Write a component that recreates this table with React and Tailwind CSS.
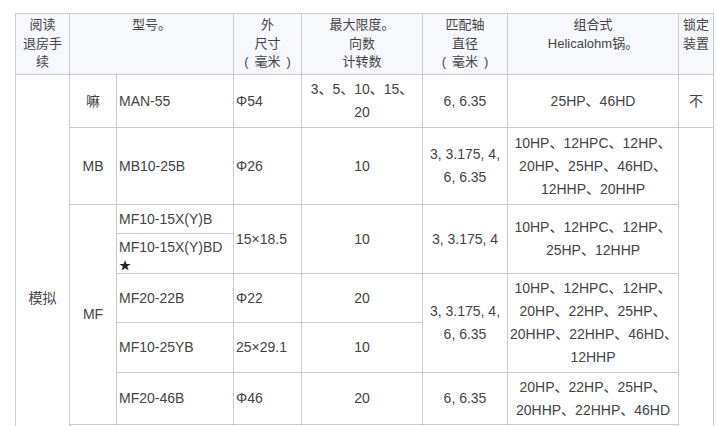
const font = { fontFamily: '"Liberation Sans", "Noto Sans CJK SC", sans-serif' }

const th = 'border border-[#cbcbcb] bg-[#f6f8fb] align-top text-center font-normal px-[2px] pt-[2px] pb-0'
const td = 'border border-[#cbcbcb] align-middle text-center px-[2px] py-0'
const tdl = 'border border-[#cbcbcb] align-middle text-left px-[2px] py-0'

const mm = (
    <>
        (<span className="px-[6px]">毫米</span>)
    </>
)

export default function App() {
    return (
        <div className="h-[426px] w-[716px] overflow-hidden bg-white pt-[13px] pl-[15px]" style={font}>
            <table className="table-fixed border-collapse w-[698px] text-[#444] text-[14px] leading-[23px]">
                <colgroup>
                    <col className="w-[54px]" />
                    <col className="w-[47px]" />
                    <col className="w-[117px]" />
                    <col className="w-[68px]" />
                    <col className="w-[121px]" />
                    <col className="w-[85px]" />
                    <col className="w-[171px]" />
                    <col className="w-[35px]" />
                </colgroup>
                <thead className="text-[13px] leading-[18.5px]">
                    <tr className="h-[61px]">
                        <th className={th}>阅读<br />退房手<br />续</th>
                        <th className={th} colSpan={2}>型号。</th>
                        <th className={th}>外<br />尺寸<br />{mm}</th>
                        <th className={th}>最大限度。<br />向数<br />计转数</th>
                        <th className={th}>匹配轴<br />直径<br />{mm}</th>
                        <th className={th}>组合式<br />Helicalohm锅。</th>
                        <th className={th}>锁定<br />装置</th>
                    </tr>
                </thead>
                <tbody className="whitespace-nowrap">
                    <tr className="h-[53px]">
                        <td className={td} rowSpan={8}>模拟</td>
                        <td className={td}>嘛</td>
                        <td className={tdl}>MAN-55</td>
                        <td className={tdl}>Φ54</td>
                        <td className={td}>3、5、10、15、<br />20</td>
                        <td className={td}>6, 6.35</td>
                        <td className={td}>25HP、46HD</td>
                        <td className={td}>不</td>
                    </tr>
                    <tr className="h-[77px]">
                        <td className={td}>MB</td>
                        <td className={tdl}>MB10-25B</td>
                        <td className={tdl}>Φ26</td>
                        <td className={td}>10</td>
                        <td className={td}>3, 3.175, 4,<br />6, 6.35</td>
                        <td className={td}>10HP、12HPC、12HP、<br />20HP、25HP、46HD、<br />12HHP、20HHP</td>
                        <td className={td} rowSpan={7}></td>
                    </tr>
                    <tr className="h-[29px]">
                        <td className={td} rowSpan={5}>MF</td>
                        <td className={tdl}>MF10-15X(Y)B</td>
                        <td className={tdl} rowSpan={2}>15×18.5</td>
                        <td className={td} rowSpan={2}>10</td>
                        <td className={td} rowSpan={2}>3, 3.175, 4</td>
                        <td className={td} rowSpan={2}>10HP、12HPC、12HP、<br />25HP、12HHP</td>
                    </tr>
                    <tr className="h-[40px]">
                        <td className={tdl + ' pt-[2px]'}>
                            <div>MF10-15X(Y)BD</div>
                            <div className="text-[12px] leading-[14px] text-[#222]">★</div>
                        </td>
                    </tr>
                    <tr className="h-[49px]">
                        <td className={tdl}>MF20-22B</td>
                        <td className={tdl}>Φ22</td>
                        <td className={td}>20</td>
                        <td className={td} rowSpan={2}>3, 3.175, 4,<br />6, 6.35</td>
                        <td className={td} rowSpan={2}>10HP、12HPC、12HP、<br />20HP、22HP、25HP、<br />20HHP、22HHP、46HD、<br />12HHP</td>
                    </tr>
                    <tr className="h-[50px]">
                        <td className={tdl}>MF10-25YB</td>
                        <td className={tdl}>25×29.1</td>
                        <td className={td}>10</td>
                    </tr>
                    <tr className="h-[52px]">
                        <td className={tdl}>MF20-46B</td>
                        <td className={tdl}>Φ46</td>
                        <td className={td}>20</td>
                        <td className={td}>6, 6.35</td>
                        <td className={td}>20HP、22HP、25HP、<br />20HHP、22HHP、46HD</td>
                    </tr>
                    <tr className="h-[98px]">
                        <td className={td}></td>
                        <td className={tdl}></td>
                        <td className={tdl}></td>
                        <td className={td}></td>
                        <td className={td}></td>
                        <td className={td}></td>
                    </tr>
                </tbody>
            </table>
        </div>
    )
}
